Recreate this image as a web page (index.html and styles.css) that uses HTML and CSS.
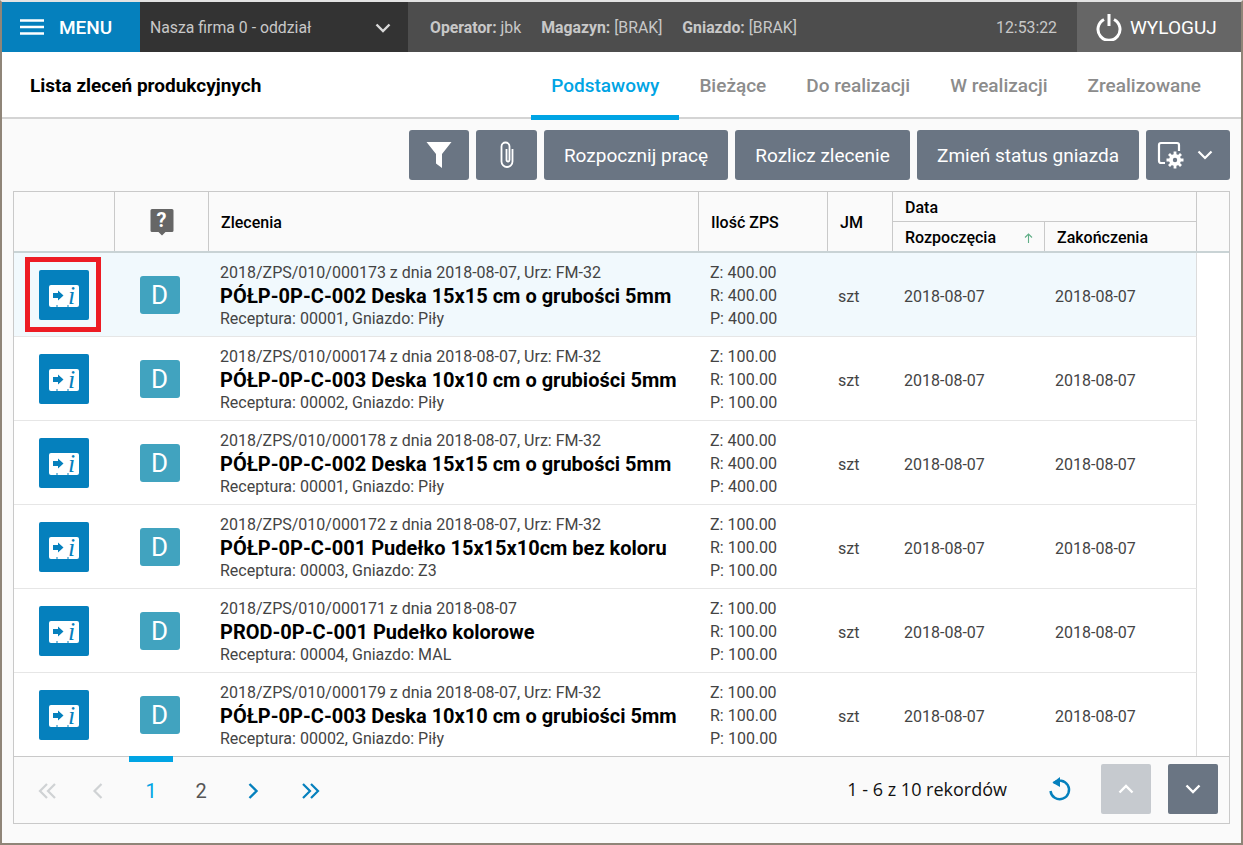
FILE: index.html
```html
<!DOCTYPE html>
<html lang="pl">
<head>
<meta charset="utf-8">
<title>Lista zleceń produkcyjnych</title>
<link rel="stylesheet" href="styles.css">
</head>
<body>
<div class="app">
  <header class="topbar">
    <div class="menu">
      <svg class="burger" width="24" height="16" viewBox="0 0 24 16"><path d="M0 1.500h24M0 8h24M0 14.500h24" stroke="#fff" stroke-width="2.400"/></svg>
      <span>MENU</span>
    </div>
    <div class="company">
      <span>Nasza firma 0 - oddział</span>
      <svg width="16" height="10" viewBox="0 0 16 10"><path d="M1.500 1.500 8 8l6.500-6.500" fill="none" stroke="#d9d9d9" stroke-width="2.400"/></svg>
    </div>
    <div class="info">
      <span class="info-item"><b>Operator:</b> jbk</span>
      <span class="info-item"><b>Magazyn:</b> [BRAK]</span>
      <span class="info-item"><b>Gniazdo:</b> [BRAK]</span>
      <span class="clock">12:53:22</span>
    </div>
    <div class="logout">
      <svg width="26" height="28" viewBox="0 0 26 28"><path d="M8 6.500a11 11 0 1 0 10 0M13 1v12" fill="none" stroke="#fff" stroke-width="3"/></svg>
      <span>WYLOGUJ</span>
    </div>
  </header>

  <div class="titlebar">
    <h1>Lista zleceń produkcyjnych</h1>
    <nav class="tabs">
      <a class="tab active">Podstawowy</a>
      <a class="tab">Bieżące</a>
      <a class="tab">Do realizacji</a>
      <a class="tab">W realizacji</a>
      <a class="tab">Zrealizowane</a>
    </nav>
  </div>

  <div class="toolbar">
    <button class="btn btn-filter"><svg width="26" height="28" viewBox="0 0 26 28"><path d="M.5 1h25l-9.500 12v14l-6-4.500V13z" fill="#fff"/></svg></button>
    <button class="btn btn-clip"><svg width="18" height="30" viewBox="0 0 18 30"><path d="M14.500 9v12.500a5.500 5.500 0 0 1-11 0V6.500a4 4 0 0 1 8 0v13.500a1.500 1.500 0 0 1-3 0V9" fill="none" stroke="#fff" stroke-width="1.800"/></svg></button>
    <button class="btn btn-start">Rozpocznij pracę</button>
    <button class="btn btn-settle">Rozlicz zlecenie</button>
    <button class="btn btn-status">Zmień status gniazda</button>
    <button class="btn btn-settings">
      <svg width="28" height="28" viewBox="0 0 28 28"><path d="M8 22H4a2 2 0 0 1-2-2V4a2 2 0 0 1 2-2h16a2 2 0 0 1 2 2v6" fill="none" stroke="#fff" stroke-width="2.200"/><circle cx="18" cy="19" r="6" fill="#fff"/><path d="M18 10.500v17M9.500 19h17M12 13l12 12M24 13 12 25" stroke="#fff" stroke-width="2.800"/><circle cx="18" cy="19" r="2.200" fill="#6a7583"/></svg>
      <svg width="16" height="10" viewBox="0 0 16 10"><path d="M1.500 1.500 8 8l6.500-6.500" fill="none" stroke="#fff" stroke-width="2.200"/></svg>
    </button>
  </div>

  <section class="grid">
    <div class="thead">
      <div class="th"></div>
      <div class="th th-center">
        <svg width="24" height="28" viewBox="0 0 24 28"><path d="M2 1h20a1.500 1.500 0 0 1 1.500 1.500v20a1.500 1.500 0 0 1-1.500 1.500h-6.500L12 27.500 8.500 24H2A1.500 1.500 0 0 1 .5 22.500v-20A1.500 1.500 0 0 1 2 1z" fill="#666"/></svg>
        <span class="q">?</span>
      </div>
      <div class="th th-pad">Zlecenia</div>
      <div class="th th-pad">Ilość ZPS</div>
      <div class="th th-pad">JM</div>
      <div class="th-group">
        <div class="th-date">Data</div>
        <div class="th-sub">
          <div class="th-cell">Rozpoczęcia<svg class="sort" width="9" height="10" viewBox="0 0 9 10"><path d="M4.500 10V1.500M1 4.500l3.500-3.500L8 4.500" fill="none" stroke="#5fae86" stroke-width="1.100"/></svg></div>
          <div class="th-cell">Zakończenia</div>
        </div>
      </div>
      <div class="th"></div>
    </div>

    <div class="tbody">
      <div class="row selected">
        <div class="cell cell-ticket"><a class="ticket"><svg width="30" height="22" viewBox="0 0 30 22"><use href="#ticket"/></svg><span class="ticket-i">i</span></a></div>
        <div class="cell cell-badge"><span class="badge">D</span></div>
        <div class="cell order"><div class="meta">2018/ZPS/010/000173 z dnia 2018-08-07, Urz: FM-32</div><div class="name">PÓŁP-0P-C-002 Deska 15x15 cm o grubości 5mm</div><div class="meta2">Receptura: 00001, Gniazdo: Piły</div></div>
        <div class="cell qty"><div>Z: 400.00</div><div>R: 400.00</div><div>P: 400.00</div></div>
        <div class="cell unit">szt</div>
        <div class="cell date">2018-08-07</div>
        <div class="cell date">2018-08-07</div>
      </div>
      <div class="row">
        <div class="cell cell-ticket"><a class="ticket"><svg width="30" height="22" viewBox="0 0 30 22"><use href="#ticket"/></svg><span class="ticket-i">i</span></a></div>
        <div class="cell cell-badge"><span class="badge">D</span></div>
        <div class="cell order"><div class="meta">2018/ZPS/010/000174 z dnia 2018-08-07, Urz: FM-32</div><div class="name">PÓŁP-0P-C-003 Deska 10x10 cm o grubiości 5mm</div><div class="meta2">Receptura: 00002, Gniazdo: Piły</div></div>
        <div class="cell qty"><div>Z: 100.00</div><div>R: 100.00</div><div>P: 100.00</div></div>
        <div class="cell unit">szt</div>
        <div class="cell date">2018-08-07</div>
        <div class="cell date">2018-08-07</div>
      </div>
      <div class="row">
        <div class="cell cell-ticket"><a class="ticket"><svg width="30" height="22" viewBox="0 0 30 22"><use href="#ticket"/></svg><span class="ticket-i">i</span></a></div>
        <div class="cell cell-badge"><span class="badge">D</span></div>
        <div class="cell order"><div class="meta">2018/ZPS/010/000178 z dnia 2018-08-07, Urz: FM-32</div><div class="name">PÓŁP-0P-C-002 Deska 15x15 cm o grubości 5mm</div><div class="meta2">Receptura: 00001, Gniazdo: Piły</div></div>
        <div class="cell qty"><div>Z: 400.00</div><div>R: 400.00</div><div>P: 400.00</div></div>
        <div class="cell unit">szt</div>
        <div class="cell date">2018-08-07</div>
        <div class="cell date">2018-08-07</div>
      </div>
      <div class="row">
        <div class="cell cell-ticket"><a class="ticket"><svg width="30" height="22" viewBox="0 0 30 22"><use href="#ticket"/></svg><span class="ticket-i">i</span></a></div>
        <div class="cell cell-badge"><span class="badge">D</span></div>
        <div class="cell order"><div class="meta">2018/ZPS/010/000172 z dnia 2018-08-07, Urz: FM-32</div><div class="name">PÓŁP-0P-C-001 Pudełko 15x15x10cm bez koloru</div><div class="meta2">Receptura: 00003, Gniazdo: Z3</div></div>
        <div class="cell qty"><div>Z: 100.00</div><div>R: 100.00</div><div>P: 100.00</div></div>
        <div class="cell unit">szt</div>
        <div class="cell date">2018-08-07</div>
        <div class="cell date">2018-08-07</div>
      </div>
      <div class="row">
        <div class="cell cell-ticket"><a class="ticket"><svg width="30" height="22" viewBox="0 0 30 22"><use href="#ticket"/></svg><span class="ticket-i">i</span></a></div>
        <div class="cell cell-badge"><span class="badge">D</span></div>
        <div class="cell order"><div class="meta">2018/ZPS/010/000171 z dnia 2018-08-07</div><div class="name">PROD-0P-C-001 Pudełko kolorowe</div><div class="meta2">Receptura: 00004, Gniazdo: MAL</div></div>
        <div class="cell qty"><div>Z: 100.00</div><div>R: 100.00</div><div>P: 100.00</div></div>
        <div class="cell unit">szt</div>
        <div class="cell date">2018-08-07</div>
        <div class="cell date">2018-08-07</div>
      </div>
      <div class="row last">
        <div class="cell cell-ticket"><a class="ticket"><svg width="30" height="22" viewBox="0 0 30 22"><use href="#ticket"/></svg><span class="ticket-i">i</span></a></div>
        <div class="cell cell-badge"><span class="badge">D</span></div>
        <div class="cell order"><div class="meta">2018/ZPS/010/000179 z dnia 2018-08-07, Urz: FM-32</div><div class="name">PÓŁP-0P-C-003 Deska 10x10 cm o grubiości 5mm</div><div class="meta2">Receptura: 00002, Gniazdo: Piły</div></div>
        <div class="cell qty"><div>Z: 100.00</div><div>R: 100.00</div><div>P: 100.00</div></div>
        <div class="cell unit">szt</div>
        <div class="cell date">2018-08-07</div>
        <div class="cell date">2018-08-07</div>
      </div>
      <div class="highlight-frame"></div>
    </div>

    <footer class="pager">
      <div class="pages">
        <span class="pg"><svg width="20" height="16" viewBox="0 0 20 16"><path d="M9 1 2 8l7 7M17 1l-7 7 7 7" fill="none" stroke="#cfd2d4" stroke-width="2.200"/></svg></span>
        <span class="pg pg-prev"><svg width="12" height="16" viewBox="0 0 12 16"><path d="M9.500 1l-7 7 7 7" fill="none" stroke="#cfd2d4" stroke-width="2.200"/></svg></span>
        <span class="pg pg-num current">1</span>
        <span class="pg pg-num">2</span>
        <span class="pg"><svg width="12" height="16" viewBox="0 0 12 16"><path d="M2.500 1l7 7-7 7" fill="none" stroke="#0580bd" stroke-width="2.400"/></svg></span>
        <span class="pg"><svg width="20" height="16" viewBox="0 0 20 16"><path d="M3 1l7 7-7 7M11 1l7 7-7 7" fill="none" stroke="#0580bd" stroke-width="2.200"/></svg></span>
      </div>
      <div class="pager-right">
        <span class="records">1 - 6 z 10 rekordów</span>
        <svg class="refresh" width="24" height="26" viewBox="0 0 24 26"><path d="M5.500 7A9.300 9.300 0 1 1 2.500 15" fill="none" stroke="#0580bd" stroke-width="2.400"/><path d="M12 1v10L4.500 6.800z" fill="#0580bd"/></svg>
        <button class="btn-sq off"><svg width="16" height="10" viewBox="0 0 16 10"><path d="M1.500 8.500 8 2l6.500 6.500" fill="none" stroke="#fff" stroke-width="2.400"/></svg></button>
        <button class="btn-sq"><svg width="16" height="10" viewBox="0 0 16 10"><path d="M1.500 1.500 8 8l6.500-6.500" fill="none" stroke="#fff" stroke-width="2.400"/></svg></button>
      </div>
    </footer>
  </section>
</div>
<svg class="defs" width="0" height="0"><defs><g id="ticket"><path d="M2 0h26a2 2 0 0 1 2 2v18a2 2 0 0 1-2 2H19.500v-2h-1v2H8.500v-2h-1v2H2a2 2 0 0 1-2-2V2a2 2 0 0 1 2-2z" fill="#fff"/><path d="M4 8h5V5.500l5.500 5-5.500 5V13H4z" fill="#0580bd"/></g></defs></svg>
</body>
</html>
```
FILE: styles.css
```css
* { box-sizing: border-box; }
html, body { margin: 0; padding: 0; }
body {
  width: 1243px;
  height: 845px;
  overflow: hidden;
  background: #fafafa;
  font-family: Roboto, "Liberation Sans", sans-serif;
}
.app {
  width: 1243px;
  height: 845px;
  display: flex;
  flex-direction: column;
  border-style: solid;
  border-color: #e3e3e3 #8f8578 #8f8578 #8f8578;
  border-width: 2px 2px 2px 2px;
}
.defs { position: absolute; }

/* top bar */
.topbar { display: flex; height: 50px; flex: none; color: #c8c8c8; font-size: 15.8px; }
.menu {
  width: 138px;
  background: #0580bd;
  color: #fff;
  display: flex;
  align-items: center;
  padding-left: 18px;
  gap: 15px;
  font-size: 19px;
  font-weight: 500;
}
.company {
  width: 268px;
  background: #333;
  display: flex;
  align-items: center;
  justify-content: space-between;
  padding: 1px 17px 0 10px;
}
.info {
  flex: 1;
  background: #4d4d4d;
  display: flex;
  align-items: center;
  padding: 1px 0 0 22px;
  gap: 20px;
}
.info b { font-weight: 700; }
.clock { margin-left: auto; margin-right: 20px; }
.logout {
  width: 164px;
  background: #666;
  color: #fff;
  display: flex;
  align-items: center;
  padding-left: 19px;
  gap: 8px;
  font-size: 19px;
}

/* title */
.titlebar {
  height: 67px;
  flex: none;
  background: #fff;
  border-bottom: 2px solid #d4d4d4;
  display: flex;
  justify-content: space-between;
  padding-left: 28px;
}
h1 { margin: 0; font-size: 19px; font-weight: 700; line-height: 67px; color: #000; }
.tabs { display: flex; margin-right: 20px; height: 68px; }
.tab {
  padding: 0 20px;
  font-size: 19px;
  font-weight: 500;
  line-height: 67px;
  color: #8c8c8c;
}
.tab.active { color: #00a4e4; border-bottom: 5px solid #00a4e4; }

/* toolbar */
.toolbar {
  flex: none;
  display: flex;
  justify-content: flex-end;
  gap: 7px;
  padding: 11px 11px 0 0;
  height: 72px;
}
.btn {
  height: 50px;
  border: 0;
  border-radius: 3px;
  background: #6a7583;
  color: #fff;
  font-family: inherit;
  font-size: 19px;
  display: flex;
  align-items: center;
  justify-content: center;
  padding: 0;
}
.btn-filter { width: 60px; }
.btn-clip { width: 61px; }
.btn-start { width: 184px; }
.btn-settle { width: 175px; }
.btn-status { width: 222px; }
.btn-settings { width: 84px; gap: 12px; justify-content: flex-start; padding-left: 11px; }

/* grid */
.grid {
  width: 1217px;
  margin-left: 11px;
  height: 633px;
  flex: none;
  border: 1px solid #c9c9c9;
  display: flex;
  flex-direction: column;
}
.thead {
  height: 61px;
  flex: none;
  display: grid;
  grid-template-columns: 101px 94px 490px 129px 65px 304px 1fr;
  border-bottom: 2px solid #c9d3d5;
  color: #000;
  font-size: 16px;
  font-weight: 500;
}
.th {
  border-right: 1px solid #c9c9c9;
  display: flex;
  align-items: center;
  position: relative;
}
.th:last-child { border-right: 0; }
.th-center { justify-content: center; }
.th-pad { padding: 2px 0 0 12px; }
.q {
  position: absolute;
  left: 0;
  right: 0;
  top: 17px;
  text-align: center;
  color: #fff;
  font-size: 20px;
  font-weight: 700;
  line-height: 22px;
}
.th-group { border-right: 1px solid #c9c9c9; display: flex; flex-direction: column; }
.th-date {
  height: 30px;
  padding: 1px 0 0 12px;
  line-height: 30px;
  border-bottom: 1px solid #c9c9c9;
}
.th-sub { flex: 1; display: grid; grid-template-columns: 152px 1fr; }
.th-cell { display: flex; align-items: center; justify-content: space-between; padding: 2px 12px 0; }
.th-cell:first-child { border-right: 1px solid #c9c9c9; }
.th-cell:last-child { padding-left: 12px; }
.sort { margin-right: -1px; }

.tbody { position: relative; flex: 1; background: #fff; min-height: 0; }
.row {
  height: 84px;
  display: grid;
  grid-template-columns: 101px 94px 490px 129px 65px 152px 152px;
  border-bottom: 1px solid #e6e6e6;
  width: 1183px;
  border-right: 1px solid #dcdcdc;
}
.row.last { height: 83px; border-bottom: 0; }
.row.selected { background: #f1f9fd; }
.cell { display: flex; align-items: center; min-width: 0; }
.cell-ticket { justify-content: center; padding-right: 1px; }
.cell-badge { justify-content: center; padding-right: 5px; }
.ticket {
  width: 50px;
  height: 50px;
  background: #0580bd;
  border-radius: 2px;
  display: flex;
  align-items: center;
  justify-content: center;
  position: relative;
}
.ticket svg { margin-top: 2px; }
.ticket-i {
  position: absolute;
  left: 29px;
  top: 11px;
  font-family: "Liberation Serif", serif;
  font-style: italic;
  font-weight: 400;
  font-size: 26px;
  line-height: 30px;
  color: #0580bd;
}
.badge {
  width: 40px;
  height: 38px;
  background: #41a3bf;
  border-radius: 3px;
  color: #fff;
  font-size: 26px;
  line-height: 38px;
  text-align: center;
}
.order {
  flex-direction: column;
  align-items: flex-start;
  justify-content: center;
  padding: 3px 0 0 11px;
  color: #444;
  font-size: 16px;
  white-space: nowrap;
}
.meta { line-height: 20px; }
.name { font-size: 20px; font-weight: 700; color: #000; line-height: 26px; }
.meta2 { line-height: 20px; }
.qty {
  flex-direction: column;
  align-items: flex-start;
  justify-content: center;
  padding: 1px 0 0 11px;
  font-size: 16px;
  line-height: 23px;
  color: #444;
}
.unit { padding: 3px 0 0 10px; font-size: 16px; color: #444; }
.date { padding: 3px 0 0 11px; font-size: 16px; color: #444; }
.date + .date { padding-left: 10px; }
.highlight-frame {
  position: absolute;
  left: 11px;
  top: 4px;
  width: 76px;
  height: 75px;
  border: 5px solid #ed1c24;
  pointer-events: none;
}

/* pager */
.pager {
  height: 67px;
  flex: none;
  border-top: 1px solid #c9c9c9;
  display: flex;
  justify-content: space-between;
  align-items: center;
  padding: 0 11px 0 14px;
}
.pages { display: flex; align-items: center; margin-top: 2px; }
.pg { width: 52px; height: 66px; display: flex; align-items: center; justify-content: center; position: relative; }
.pg:nth-child(1) { width: 40px; }
.pg:nth-child(2) { width: 58px; }
.pg:nth-child(3), .pg:nth-child(4) { width: 50px; }
.pg:nth-child(5) { width: 54px; }
.pg:nth-child(6) { width: 59px; }
.pg-prev svg { margin-left: 2px; }
.pg-num { font-size: 20px; color: #555; font-weight: 400; }
.pg-num.current { color: #00a4e4; }
.pg-num.current::before {
  content: "";
  position: absolute;
  top: -2px;
  left: 3px;
  width: 44px;
  height: 6px;
  background: #00a4e4;
}
.pager-right { display: flex; align-items: center; margin-top: -2px; }
.records { font-family: "Open Sans", sans-serif; font-size: 18px; color: #111; margin-right: 41px; }
.refresh { margin-right: 29px; }
.btn-sq {
  width: 50px;
  height: 50px;
  border: 0;
  padding: 0;
  border-radius: 2px;
  background: #6a7583;
  display: flex;
  align-items: center;
  justify-content: center;
  margin-left: 17px;
}
.btn-sq.off { background: #c6cacf; margin-left: 0; }
```
